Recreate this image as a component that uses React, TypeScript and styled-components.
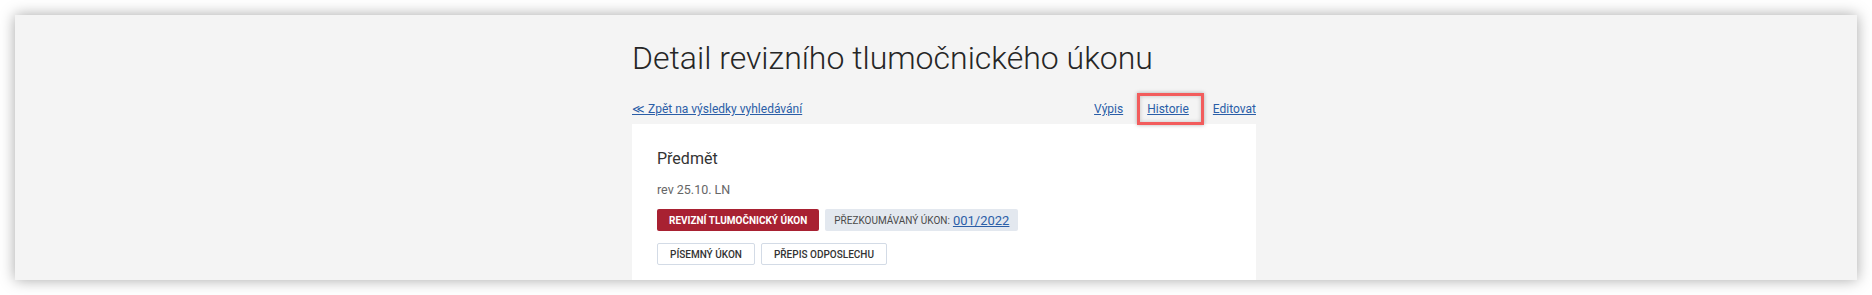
import styled, { createGlobalStyle } from 'styled-components'

const GlobalStyle = createGlobalStyle`
  html, body {
    margin: 0;
    padding: 0;
    background: #ffffff;
    font-family: Roboto, "Liberation Sans", sans-serif;
  }
`

const Page = styled.div`
  padding: 15px;
  height: 295px;
  box-sizing: border-box;
`

const Panel = styled.div`
  height: 265px;
  background: #f4f4f4;
  box-shadow: 0 0 14px rgba(0, 0, 0, 0.35);
  display: flex;
  justify-content: center;
  padding: 23px 0 0 16px;
  box-sizing: border-box;
  overflow: hidden;
`

const Column = styled.div`
  width: 624px;
  display: flex;
  flex-direction: column;
`

const Title = styled.h1`
  margin: 0;
  font-size: 32px;
  line-height: 40px;
  font-weight: 300;
  color: #262626;
`

const NavRow = styled.div`
  margin-top: 23px;
  display: flex;
  justify-content: space-between;
  font-size: 12px;
  line-height: 16px;
`

const NavLinks = styled.div`
  display: flex;
  gap: 24px;
`

const NavLink = styled.a<{ $marked?: boolean }>`
  color: #2b5ea7;
  text-decoration: underline;
  position: relative;
  cursor: pointer;
  ${p => p.$marked && `
    &::after {
      content: '';
      position: absolute;
      top: -8px;
      bottom: -8px;
      left: -10px;
      right: -15px;
      border: 3px solid #f25c5c;
      box-shadow: 0 0 4px rgba(0, 0, 0, 0.3), inset 0 0 4px rgba(0, 0, 0, 0.2);
    }
  `}
`

const Card = styled.div`
  margin-top: 7px;
  background: #ffffff;
  padding: 25px 25px 30px;
  flex: 1;
`

const Subject = styled.div`
  font-size: 16px;
  line-height: 20px;
  color: #333;
`

const Note = styled.div`
  margin-top: 13px;
  font-size: 12.5px;
  line-height: 16px;
  color: #666;
`

const TagRow = styled.div<{ $top: number }>`
  margin-top: ${p => p.$top}px;
  display: flex;
  gap: 6px;
`

const Tag = styled.span<{ $variant: 'red' | 'gray' | 'outline' }>`
  height: 22px;
  box-sizing: border-box;
  display: inline-flex;
  align-items: center;
  padding: 0 12px;
  border-radius: 2px;
  font-size: 10px;
  text-transform: uppercase;
  white-space: nowrap;
  ${p => p.$variant === 'red' && `
    background: #a82132;
    color: #fff;
    font-weight: 700;
  `}
  ${p => p.$variant === 'gray' && `
    background: #e3e8ef;
    color: #4a4a4a;
    padding: 0 9px;
  `}
  ${p => p.$variant === 'outline' && `
    background: #fff;
    border: 1px solid #d3dbe6;
    color: #333;
    font-weight: 500;
  `}
`

const TagLink = styled.a`
  color: #2b5ea7;
  text-decoration: underline;
  font-size: 13px;
  text-transform: none;
  margin-left: 3px;
`

export default function App() {
  return (
    <>
      <GlobalStyle />
      <Page>
        <Panel>
          <Column>
            <Title>Detail revizního tlumočnického úkonu</Title>
            <NavRow>
              <NavLink>≪ Zpět na výsledky vyhledávání</NavLink>
              <NavLinks>
                <NavLink>Výpis</NavLink>
                <NavLink $marked>Historie</NavLink>
                <NavLink>Editovat</NavLink>
              </NavLinks>
            </NavRow>
            <Card>
              <Subject>Předmět</Subject>
              <Note>rev 25.10. LN</Note>
              <TagRow $top={11}>
                <Tag $variant="red">Revizní tlumočnický úkon</Tag>
                <Tag $variant="gray">
                  Přezkoumávaný úkon:<TagLink>001/2022</TagLink>
                </Tag>
              </TagRow>
              <TagRow $top={12}>
                <Tag $variant="outline">Písemný úkon</Tag>
                <Tag $variant="outline">Přepis odposlechu</Tag>
              </TagRow>
            </Card>
          </Column>
        </Panel>
      </Page>
    </>
  )
}
